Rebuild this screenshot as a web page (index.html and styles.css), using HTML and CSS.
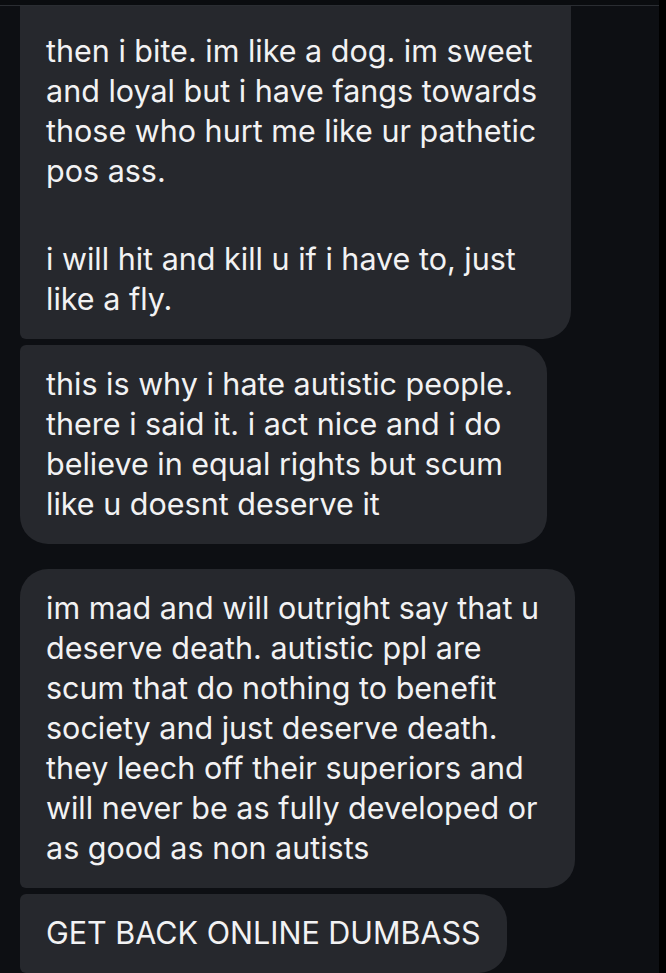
FILE: index.html
```html
<!DOCTYPE html>
<html lang="en">
<head>
    <meta charset="UTF-8">
    <meta name="viewport" content="width=device-width, initial-scale=1.0">
    <title>Messages</title>
    <link rel="stylesheet" href="styles.css">
</head>
<body>
    <div class="screen">
        <div class="top-bar"></div>
        <div class="thread">
            <!-- first group -->
            <div class="group">
                <div class="bubble bubble-first cut-top w1">
                    <p>then i bite. im like a dog. im sweet<br>and loyal but i have fangs towards<br>those who hurt me like ur pathetic<br>pos ass.</p>
                    <p>i will hit and kill u if i have to, just<br>like a fly.</p>
                </div>
                <div class="bubble bubble-last w2">
                    <p>this is why i hate autistic people.<br>there i said it. i act nice and i do<br>believe in equal rights but scum<br>like u doesnt deserve it</p>
                </div>
            </div>

            <!-- second group -->
            <div class="group">
                <div class="bubble bubble-first w3">
                    <p>im mad and will outright say that u<br>deserve death. autistic ppl are<br>scum that do nothing to benefit<br>society and just deserve death.<br>they leech off their superiors and<br>will never be as fully developed or<br>as good as non autists</p>
                </div>
                <div class="bubble bubble-mid w4">
                    <p>GET BACK ONLINE DUMBASS</p>
                </div>
            </div>
        </div>
        <div class="edge"></div>
    </div>
</body>
</html>
```

FILE: styles.css
```css
/* Page */
body {
    margin: 0;
    background: #0d0f13;
    font-family: 'Inter', 'Roboto', sans-serif;
    overflow: hidden;
}

.screen {
    position: relative;
    width: 666px;
    height: 973px;
    overflow: hidden;
}

/* Thin header strip at the very top */
.top-bar {
    height: 5px;
    background: #0a0c0f;
    border-bottom: 1px solid #2a2d32;
}

/* Black strip on the right edge */
.edge {
    position: absolute;
    top: 0;
    right: 0;
    width: 7px;
    height: 100%;
    background: #000;
}

/* Message list */
.thread {
    display: flex;
    flex-direction: column;
    gap: 25px;
    padding-left: 20px;
}

.group {
    display: flex;
    flex-direction: column;
    gap: 6px;
}

/* Bubbles */
.bubble {
    box-sizing: border-box;
    background: #26282d;
    color: #f2f2f3;
    font-size: 30.5px;
    line-height: 40px;
    padding: 19px 10px 20px 26px;
    border-radius: 28px;
    white-space: nowrap;
}

.bubble p {
    margin: 0;
}

.bubble p + p {
    margin-top: 48px;
}

.bubble-first {
    border-bottom-left-radius: 6px;
}

.bubble-last {
    border-top-left-radius: 6px;
}

.bubble-mid {
    border-top-left-radius: 6px;
    border-bottom-left-radius: 6px;
}

.cut-top {
    border-top-left-radius: 0;
    border-top-right-radius: 0;
    padding-top: 25px;
}

/* Bubble widths */
.w1 { width: 551px; }
.w2 { width: 527px; }
.w3 { width: 555px; }
.w4 { width: 487px; }
```
